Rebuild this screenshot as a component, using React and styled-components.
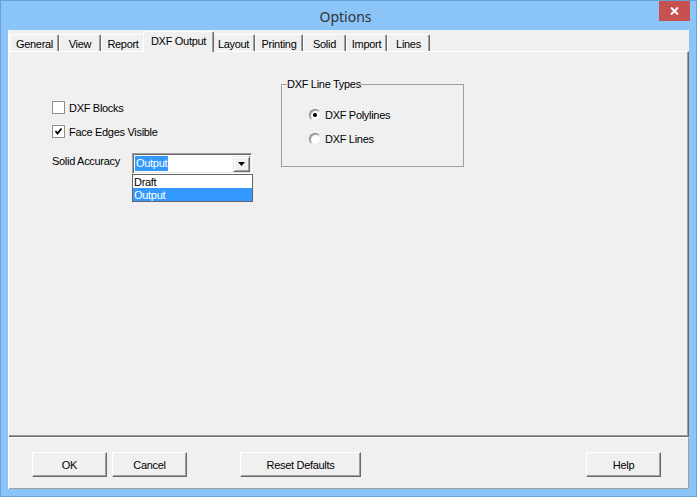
import React from 'react'
import styled, { createGlobalStyle } from 'styled-components'

const GlobalStyle = createGlobalStyle`
  html, body {
    margin: 0;
    padding: 0;
    background: #ffffff;
  }
  * {
    box-sizing: border-box;
  }
`

const Window = styled.div`
  width: 697px;
  height: 497px;
  border: 1px solid #6a9fd4;
  background: #8bc4f6;
  display: flex;
  flex-direction: column;
  font-family: "Liberation Sans", Arial, sans-serif;
  font-size: 11px;
  letter-spacing: -0.3px;
  color: #000;
`

const TitleBar = styled.div`
  height: 29px;
  display: grid;
  grid-template-columns: 1fr auto 1fr;
  padding-right: 6px;
`

const Title = styled.div`
  grid-column: 2;
  align-self: center;
  font-family: "Noto Sans", "Open Sans", sans-serif;
  font-size: 14px;
  letter-spacing: 0;
  color: #333;
  margin-top: 1px;
`

const CloseButton = styled.div`
  grid-column: 3;
  justify-self: end;
  width: 31px;
  height: 20px;
  background: #c75050;
  display: flex;
  align-items: center;
  justify-content: center;
`

const Client = styled.div`
  flex: 1;
  margin: 0 7px 7px 7px;
  background: #f0f0f0;
  border-left: 1px solid #ffffff;
  padding-top: 1px;
  display: flex;
  flex-direction: column;
`

const TabStrip = styled.div`
  height: 20px;
  display: flex;
  align-items: flex-end;
  padding-left: 1px;
`

const Tab = styled.div`
  width: ${p => p.$w}px;
  height: 17px;
  border-top: 1px solid #ffffff;
  border-left: 1px solid #ffffff;
  border-right: 1px solid #696969;
  box-shadow: inset -1px 0 0 #a0a0a0;
  border-radius: 2px 2px 0 0;
  display: flex;
  align-items: center;
  justify-content: center;
  padding-top: 1px;
  white-space: nowrap;
`

const ActiveTab = styled(Tab)`
  width: ${p => p.$w + 4}px;
  height: 21px;
  margin: 0 -2px -1px -2px;
  position: relative;
  z-index: 2;
  background: #f0f0f0;
  align-items: flex-start;
  padding-top: 3px;
`

const Panel = styled.div`
  flex: 1;
  border-top: 1px solid #ffffff;
  border-right: 1px solid #696969;
  border-bottom: 1px solid #696969;
  box-shadow: inset -1px -1px 0 #a0a0a0;
  display: flex;
  align-items: flex-start;
  padding-left: 43px;
`

const LeftCol = styled.div`
  width: 229px;
  margin-top: 49px;
  display: flex;
  flex-direction: column;
`

const CheckList = styled.div`
  display: flex;
  flex-direction: column;
  gap: 11px;
`

const CheckRow = styled.label`
  display: flex;
  align-items: center;
  gap: 4px;
  height: 13px;
`

const CheckBox = styled.span`
  width: 13px;
  height: 13px;
  border: 1px solid #8f8f8f;
  background: #ffffff;
  display: flex;
  align-items: center;
  justify-content: center;
`

const ComboRow = styled.div`
  margin-top: 16px;
  display: flex;
  align-items: flex-start;
`

const FieldLabel = styled.span`
  width: 80px;
  padding-top: 1px;
  line-height: 13px;
`

const Combo = styled.div`
  position: relative;
  width: 120px;
  height: 21px;
  margin-top: -1px;
  border: 1px solid;
  border-color: #a0a0a0 #ffffff #ffffff #a0a0a0;
  box-shadow: inset 1px 1px 0 #696969, inset -1px -1px 0 #e3e3e3;
  background: #ffffff;
  padding: 2px 1px 1px 1px;
  display: flex;
  justify-content: space-between;
`

const SelectedText = styled.span`
  align-self: flex-start;
  background: #3399ff;
  color: #ffffff;
  height: 15px;
  line-height: 15px;
  padding: 0 1px;
  margin-left: 1px;
`

const DropButton = styled.span`
  width: 17px;
  height: 16px;
  background: #f0f0f0;
  border: 1px solid;
  border-color: #e3e3e3 #696969 #696969 #e3e3e3;
  box-shadow: inset 1px 1px 0 #ffffff, inset -1px -1px 0 #a0a0a0;
  display: flex;
  align-items: center;
  justify-content: center;
`

const DropList = styled.div`
  position: absolute;
  top: calc(100% + 1px);
  left: -1px;
  width: 121px;
  border: 1px solid #646464;
  background: #ffffff;
  z-index: 5;
`

const DropItem = styled.div`
  height: 13px;
  line-height: 14px;
  padding-left: 1px;
  background: ${p => (p.$active ? '#3399ff' : '#ffffff')};
  color: ${p => (p.$active ? '#ffffff' : '#000000')};
`

const GroupBox = styled.fieldset`
  margin: 26px 0 0 0;
  width: 183px;
  height: 89px;
  border: 1px solid #a0a0a0;
  padding: 19px 0 0 0;
`

const Legend = styled.legend`
  padding: 0;
  margin: 0 0 0 5px;
  line-height: 12px;
`

const RadioList = styled.div`
  display: flex;
  flex-direction: column;
  gap: 12px;
  padding-left: 27px;
`

const RadioRow = styled.label`
  display: flex;
  align-items: center;
  gap: 4px;
  height: 12px;
`

const RadioCircle = styled.span`
  width: 12px;
  height: 12px;
  border-radius: 50%;
  border: 1px solid;
  border-color: #7a7a7a #e8e8e8 #e8e8e8 #7a7a7a;
  box-shadow: inset 1px 1px 0 #b0b0b0;
  background: #ffffff;
  display: flex;
  align-items: center;
  justify-content: center;

  &::after {
    content: '';
    width: 4px;
    height: 4px;
    border-radius: 50%;
    background: ${p => (p.$checked ? '#000000' : 'transparent')};
  }
`

const Footer = styled.div`
  height: 52px;
  border-top: 1px solid #ffffff;
  border-right: 1px solid #a0a0a0;
  border-bottom: 1px solid #a0a0a0;
  padding: 14px 27px 0 23px;
  display: flex;
  align-items: flex-start;
`

const Button = styled.button`
  width: ${p => p.$w || 75}px;
  height: 25px;
  margin-left: ${p => (p.$push ? 'auto' : `${p.$gap || 0}px`)};
  background: #f0f0f0;
  border: 1px solid;
  border-color: #ffffff #696969 #696969 #ffffff;
  box-shadow: inset -1px -1px 0 #a0a0a0;
  font-family: "Liberation Sans", Arial, sans-serif;
  font-size: 11px;
  letter-spacing: -0.3px;
  color: #000;
  padding: 0;
`

const tabs = [
  ['General', 49],
  ['View', 42],
  ['Report', 44],
  ['DXF Output', 67],
  ['Layout', 43],
  ['Printing', 48],
  ['Solid', 43],
  ['Import', 41],
  ['Lines', 43],
]

const App = () => {
  return (
    <>
      <GlobalStyle />
      <Window>
        <TitleBar>
          <Title>Options</Title>
          <CloseButton>
            <svg width="9" height="8" viewBox="0 0 9 8">
              <path d="M1 0.5 L8 7.5 M8 0.5 L1 7.5" stroke="#ffffff" strokeWidth="2" />
            </svg>
          </CloseButton>
        </TitleBar>
        <Client>
          <TabStrip>
            {tabs.map(([name, w]) =>
              name === 'DXF Output'
                ? <ActiveTab key={name} $w={w}>{name}</ActiveTab>
                : <Tab key={name} $w={w}>{name}</Tab>
            )}
          </TabStrip>
          <Panel>
            <LeftCol>
              <CheckList>
                <CheckRow>
                  <CheckBox />
                  DXF Blocks
                </CheckRow>
                <CheckRow>
                  <CheckBox>
                    <svg width="9" height="9" viewBox="0 0 9 9">
                      <path d="M1.5 4 L3.5 6.5 L7.5 1.5" stroke="#000" strokeWidth="1.8" fill="none" />
                    </svg>
                  </CheckBox>
                  Face Edges Visible
                </CheckRow>
              </CheckList>
              <ComboRow>
                <FieldLabel>Solid Accuracy</FieldLabel>
                <Combo>
                  <SelectedText>Output</SelectedText>
                  <DropButton>
                    <svg width="7" height="4" viewBox="0 0 7 4">
                      <polygon points="0,0 7,0 3.5,4" fill="#000" />
                    </svg>
                  </DropButton>
                  <DropList>
                    <DropItem>Draft</DropItem>
                    <DropItem $active>Output</DropItem>
                  </DropList>
                </Combo>
              </ComboRow>
            </LeftCol>
            <GroupBox>
              <Legend>DXF Line Types</Legend>
              <RadioList>
                <RadioRow>
                  <RadioCircle $checked />
                  DXF Polylines
                </RadioRow>
                <RadioRow>
                  <RadioCircle />
                  DXF Lines
                </RadioRow>
              </RadioList>
            </GroupBox>
          </Panel>
          <Footer>
            <Button>OK</Button>
            <Button $gap={5}>Cancel</Button>
            <Button $w={121} $gap={53}>Reset Defaults</Button>
            <Button $push>Help</Button>
          </Footer>
        </Client>
      </Window>
    </>
  )
}

export default App
